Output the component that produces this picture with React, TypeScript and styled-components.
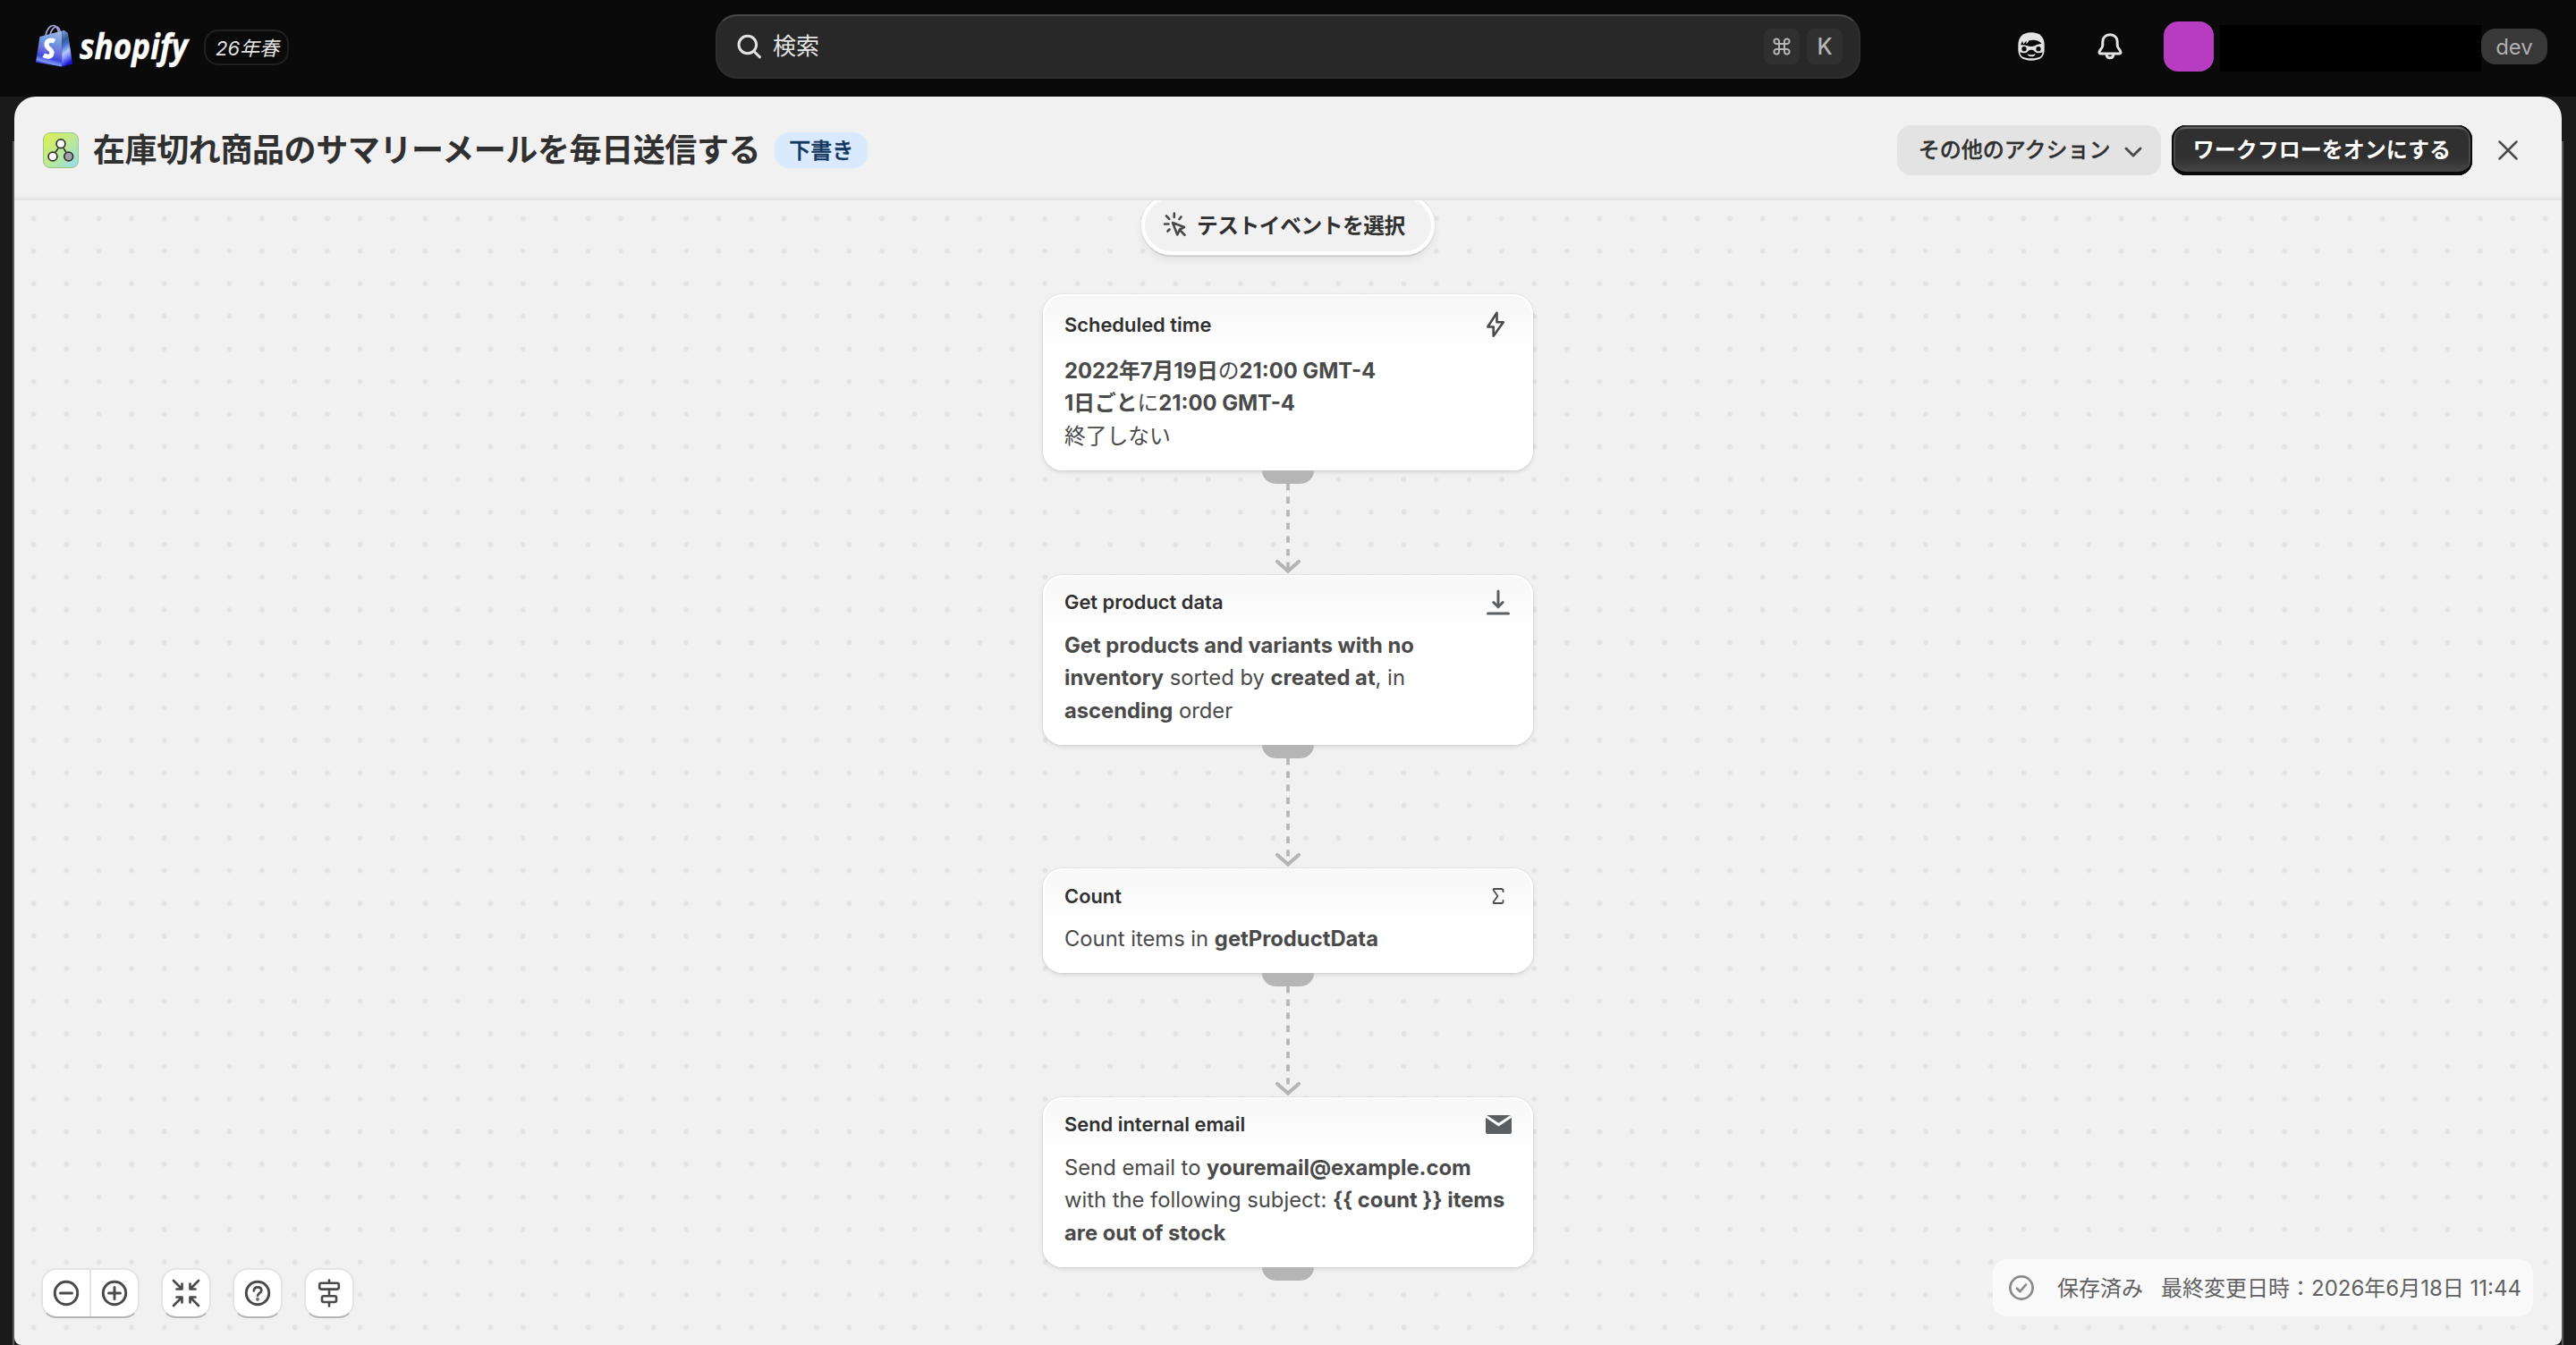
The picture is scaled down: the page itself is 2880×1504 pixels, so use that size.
import React from 'react';
import styled, { createGlobalStyle, css } from 'styled-components';

const GlobalStyle = createGlobalStyle`
  *, *::before, *::after { box-sizing: border-box; }
  body {
    margin: 0;
    background: #1a1a1a;
    font-family: Inter, "Noto Sans CJK JP", sans-serif;
    color: #303030;
  }
  button { font: inherit; border: 0; padding: 0; margin: 0; background: none; color: inherit; }
  svg { display: block; flex: none; }
`;

const Shell = styled.div`
  display: flex;
  flex-direction: column;
  width: 2880px;
  height: 1504px;
  overflow: hidden;
  background: #1a1a1a;
`;

/* ---------- top bar ---------- */

const TopBar = styled.header`
  display: grid;
  grid-template-columns: 800px 1280px 800px;
  height: 108px;
  flex: none;
  background: #0a0a0a;
`;

const Brand = styled.div`
  display: flex;
  align-items: flex-start;
  padding: 20px 0 0 38px;
`;

const Wordmark = styled.text`
  font-family: "Open Sans", sans-serif;
  font-weight: 700;
  font-style: italic;
  font-size: 38.5px;
  fill: #fff;
  stroke: #fff;
  stroke-width: 0.4px;
`;

const EditionBadge = styled.span`
  display: flex;
  align-items: center;
  justify-content: center;
  width: 95px;
  height: 40px;
  margin: 13px 0 0 10px;
  padding: 0 0 2px 2px;
  border: 2px solid #212121;
  border-radius: 16px;
  color: #e3e3e3;
  font-size: 22px;
  font-style: italic;
`;

const SearchField = styled.div`
  display: flex;
  align-items: center;
  height: 72px;
  margin-top: 16px;
  padding: 0 18px 0 22px;
  border: 2px solid #303030;
  border-top-color: #474747;
  border-radius: 24px;
  background: #282828;
  color: #e3e3e3;
  font-size: 26px;
`;

const SearchLabel = styled.span`
  flex: 1;
  margin-left: 12px;
  line-height: 36px;
`;

const Key = styled.kbd`
  display: flex;
  align-items: center;
  justify-content: center;
  width: 40px;
  height: 40px;
  margin-left: 8px;
  border-radius: 8px;
  background: #303030;
  color: #b5b5b5;
  font: 500 25px Inter, sans-serif;
`;

const Account = styled.div`
  display: flex;
  align-items: center;
  height: 104px;
  padding-left: 176px;
`;

const BellSlot = styled.span`
  margin: 0 46px 0 59px;
`;

const Avatar = styled.span`
  width: 56px;
  height: 56px;
  border-radius: 16px;
  background: #b63cc0;
`;

const StoreName = styled.span`
  width: 292px;
  height: 52px;
  margin: 4px 0 0 7px;
  background: #000;
`;

const PlanTag = styled.span`
  display: flex;
  align-items: center;
  justify-content: center;
  width: 74px;
  height: 40px;
  border-radius: 16px;
  background: #383838;
  color: #b0b0b0;
  font-size: 24px;
`;

/* ---------- panel ---------- */

const Panel = styled.main`
  display: flex;
  flex-direction: column;
  flex: 1;
  min-height: 0;
  margin: 0 16px;
  border-radius: 24px 24px 8px 8px;
  background: #f1f1f1;
  overflow: hidden;
`;

const PanelEdge = styled.div`
  display: flex;
  flex: 1;
  min-height: 0;
  flex-direction: column;
  background:
    linear-gradient(#5c5c5c, #5c5c5c) 14px 50px / 2px 100% no-repeat,
    linear-gradient(#5c5c5c, #5c5c5c) 2864px 50px / 2px 100% no-repeat;
`;

const PanelHeader = styled.div`
  display: flex;
  align-items: center;
  flex: none;
  height: 116px;
  padding: 6px 32px 0 32px;
  border-bottom: 2px solid #e3e3e3;
  box-shadow: inset 0 -2px 0 #e9e9e9;
`;

const Title = styled.h1`
  margin: 0 0 0 16px;
  font-size: 36px;
  line-height: 48px;
  font-weight: 700;
  letter-spacing: -0.4px;
  white-space: nowrap;
`;

const StatusBadge = styled.span`
  display: flex;
  align-items: center;
  height: 40px;
  margin-left: 16px;
  padding: 0 16px 3px;
  border-radius: 16px;
  background: #d9eaff;
  color: #14375e;
  font-size: 24px;
  font-weight: 500;
  -webkit-text-stroke: 0.4px #14375e;
`;

const HeaderActions = styled.div`
  display: flex;
  align-items: center;
  margin-left: auto;
`;

const ActionButton = styled.button<{ $primary?: boolean }>`
  display: flex;
  align-items: center;
  height: 56px;
  padding: 0 24px 5px;
  border-radius: 16px;
  font-size: 24px;
  font-weight: 500;
  white-space: nowrap;
  ${(p) =>
    p.$primary
      ? css`
          margin-left: 12px;
          background: linear-gradient(180deg, #303030 63%, #4a4a4a 100%);
          color: #fff;
          font-weight: 700;
          box-shadow: inset 0 -4px 0 #0a0a0a, inset 2px 0 0 #0a0a0a, inset -2px 0 0 #0a0a0a,
            inset 0 2px 0 #303030, inset 4px 0 0 #4a4a4a, inset -4px 0 0 #4a4a4a, inset 0 4px 0 #616161;
        `
      : css`
          width: 295px;
          justify-content: space-between;
          padding-right: 20px;
          background: #e3e3e3;
          -webkit-text-stroke: 0.3px #303030;

          svg { margin-top: 8px; }
        `}
`;

const CloseButton = styled.button`
  display: flex;
  align-items: center;
  justify-content: center;
  width: 56px;
  height: 56px;
  margin-left: 12px;
`;

/* ---------- canvas ---------- */

const Canvas = styled.div`
  position: relative;
  display: flex;
  flex-direction: column;
  align-items: center;
  flex: 1;
  min-height: 0;
  overflow: hidden;
  background: radial-gradient(circle at center, #e3e3e3 2.5px, rgba(227, 227, 227, 0) 3.3px) 3.5px 2.1px / 36.48px 36.48px;
`;

const TestEventButton = styled.button`
  display: flex;
  align-items: center;
  flex: none;
  width: 328px;
  height: 67px;
  margin-top: -6px;
  padding: 0 0 1px 20px;
  border: 4px solid #fff;
  border-radius: 34px;
  background: #f1f1f1;
  box-shadow: 0 0 0 1px #e2e2e2, 0 2px 1px #c4c4c4, 0 6px 10px rgba(0, 0, 0, 0.06);
  font-size: 23.7px;
  font-weight: 700;
  letter-spacing: -0.4px;
  white-space: nowrap;
  gap: 11px;
`;

const Flow = styled.div`
  display: flex;
  flex-direction: column;
  align-items: center;
  margin-top: 44px;
`;

const Card = styled.section<{ $h: number; $pad: number }>`
  display: flex;
  flex-direction: column;
  flex: none;
  width: 548px;
  height: ${(p) => p.$h}px;
  padding: ${(p) => p.$pad}px 24px 0;
  border: 2px solid #fff;
  border-width: 2px 0 0;
  border-radius: 22px;
  background: linear-gradient(180deg, #f7f7f7 0, #fff 66px);
  box-shadow: inset 2px 0 0 #fff, inset -2px 0 0 #fff, 0 0 0 1px rgba(0, 0, 0, 0.03), 0 2px 5px rgba(0, 0, 0, 0.12);
`;

const CardHead = styled.div`
  display: flex;
  align-items: center;
  justify-content: space-between;
  height: 30px;
`;

const CardTitle = styled.h2`
  margin: 0;
  font-size: 21.9px;
  line-height: 30px;
  font-weight: 600;
`;

const IconSlot = styled.span`
  display: flex;
  align-items: center;
  justify-content: center;
  width: 38px;
  height: 38px;
  margin-right: -4px;
`;

const CardBody = styled.p<{ $top: number }>`
  margin: ${(p) => p.$top}px 0 0;
  color: #4a4a4a;
  font-size: 23.77px;
  line-height: 36.48px;
  white-space: nowrap;

  b { font-weight: 700; }
`;

const Connector = styled.div<{ $h: number }>`
  display: flex;
  flex-direction: column;
  align-items: center;
  flex: none;
  height: ${(p) => p.$h}px;
`;

const Tab = styled.span`
  flex: none;
  width: 58px;
  height: 15px;
  border-radius: 0 0 15px 15px;
  background: #b5b5b5;
`;

const Toolbar = styled.div`
  position: absolute;
  left: 30px;
  top: 1194px;
  display: flex;
  gap: 24px;
`;

const ToolGroup = styled.div`
  display: flex;
  height: 56px;
  border: 2px solid #e3e3e3;
  border-bottom-color: #b5b5b5;
  border-radius: 17px;
  background: #fff;
`;

const ToolButton = styled.button`
  display: flex;
  align-items: center;
  justify-content: center;
  width: 52px;

  & + & {
    width: 54px;
    border-left: 2px solid #e3e3e3;
  }
`;

const SaveStatus = styled.div`
  position: absolute;
  left: 2212px;
  top: 1184px;
  display: flex;
  align-items: center;
  width: 604px;
  height: 64px;
  padding-left: 18px;
  border-radius: 16px;
  background: #fafafa;
  color: #616161;
  font-size: 24px;
  white-space: nowrap;
`;

const SavedText = styled.span<{ $gap: number }>`
  margin: 0 0 4px ${(p) => p.$gap}px;
`;

/* ---------- drawings ---------- */

const Logo = () => (
  <svg width="180" height="66" viewBox="38 20 180 66" overflow="visible">
    <defs>
      <linearGradient id="bagFront" x1="0.6" y1="0" x2="0.400" y2="1">
        <stop offset="0" stopColor="#9db4e6" />
        <stop offset="0.3" stopColor="#6f9be0" />
        <stop offset="0.55" stopColor="#6c6ee0" />
        <stop offset="0.75" stopColor="#3a48dc" />
        <stop offset="0.88" stopColor="#7f9cf5" />
        <stop offset="0.95" stopColor="#2a28d0" />
      </linearGradient>
      <linearGradient id="bagSide" x1="0" y1="0" x2="0.2" y2="1">
        <stop offset="0" stopColor="#8ea6de" />
        <stop offset="0.3" stopColor="#2f5f9c" />
        <stop offset="0.45" stopColor="#4a6fd0" />
        <stop offset="0.65" stopColor="#b9c8ff" />
        <stop offset="0.8" stopColor="#7a88f8" />
        <stop offset="1" stopColor="#1414d8" />
      </linearGradient>
    </defs>
    <path d="M51 40c1-7 5-11.500 8.500-11.500 4 0 6 5 6 9M56 39c1-5 4-9 7-9 2.500 0 4 3 4 6" fill="none" stroke="#a9a6dc" strokeWidth="1.700" />
    <path d="M44.500 41l25-6.500-.5 40-29-4.700z" fill="url(#bagFront)" />
    <path d="M69.500 34.500l2-.8 4.500 3.300 5 34.500-12 3.200z" fill="url(#bagSide)" />
    <path d="M61 46.300c-4-2.200-9-1-9 3.700 0 4.200 6.500 5 6 9.500-.5 4.200-5 4.700-9.300 2.300" fill="none" stroke="#fff" strokeWidth="5.200" />
    <Wordmark x="89" y="66" textLength="121" lengthAdjust="spacingAndGlyphs">shopify</Wordmark>
  </svg>
);

const SearchIcon = () => (
  <svg width="28" height="28" viewBox="0 0 28 28" fill="none" stroke="#e3e3e3" strokeWidth="3" strokeLinecap="round">
    <circle cx="11.800" cy="12" r="9.800" />
    <path d="M19 19.500l6.500 6.300" />
  </svg>
);

const CommandIcon = () => (
  <svg width="20" height="20" viewBox="0 0 20 20" fill="none" stroke="#b5b5b5" strokeWidth="2">
    <path d="M7 7V4.300A2.800 2.800 0 1 0 4.300 7h11.400A2.800 2.800 0 1 0 13 4.300v11.400A2.800 2.800 0 1 0 15.700 13H4.300A2.800 2.800 0 1 0 7 15.700z" />
  </svg>
);

const SidekickIcon = () => (
  <svg width="30" height="32" viewBox="0 0 90 96">
    <path d="M1 44C1 15 18 1 44 1c30 0 45 15 45 43v14c0 26-14 37-44 37S1 84 1 58z" fill="#e3e3e3" />
    <path d="M9 43l6-13 4 10 9-11 1 11 9-12c14-4 32-2 42 11-14 0-22 8-35 9-12-1-22-7-36-5z" fill="#0a0a0a" />
    <circle cx="21" cy="56" r="8" fill="#0a0a0a" />
    <circle cx="69" cy="56" r="8" fill="#0a0a0a" />
    <path d="M7 67c10 5 24 3 29-5 4-4 14-4 18 0 5 8 19 10 29 5-2 15-11 21-38 21S9 82 7 67z" fill="#0a0a0a" />
    <path d="M31 73c8 4 20 4 28-1-2 8-7 10-14 10s-11-3-14-9z" fill="#e3e3e3" />
  </svg>
);

const BellIcon = () => (
  <svg width="28" height="30" viewBox="0 0 28 30" fill="none" stroke="#e3e3e3" strokeWidth="3" strokeLinejoin="round" strokeLinecap="round">
    <path d="M14 1.700c-5 0-8.200 3.600-8.200 8v4c0 1.800-.8 3-2.200 4.600C1.500 20.700 1.300 23 4 23h20c2.700 0 2.500-2.300.4-4.700-1.400-1.600-2.200-2.800-2.200-4.600v-4c0-4.400-3.200-8-8.200-8z" />
    <path d="M10 23.500c.3 2.800 1.800 4.300 4 4.300s3.700-1.500 4-4.300" />
  </svg>
);

const FlowAppIcon = () => (
  <svg width="40" height="40" viewBox="0 0 40 40">
    <defs>
      <linearGradient id="appTile" x1="0" y1="0" x2="1" y2="1">
        <stop offset="0.100" stopColor="#d9f05a" />
        <stop offset="0.550" stopColor="#b8e89a" />
        <stop offset="1" stopColor="#93dcf5" />
      </linearGradient>
    </defs>
    <rect x="0.500" y="0.500" width="39" height="39" rx="7.500" fill="url(#appTile)" stroke="#9bc489" />
    <path d="M17.300 17.500l-4 5.500M23 17.500l3 5" stroke="#303030" strokeWidth="1.500" />
    <circle cx="20" cy="12.700" r="4.900" fill="#fff" stroke="#303030" strokeWidth="1.700" />
    <circle cx="11" cy="27" r="4.900" fill="#fff" stroke="#303030" strokeWidth="1.700" />
    <circle cx="28.700" cy="27" r="4.900" fill="#a0a0a8" stroke="#303030" strokeWidth="1.700" />
  </svg>
);

const ChevronIcon = () => (
  <svg width="22" height="14" viewBox="0 0 22 14" fill="none" stroke="#4a4a4a" strokeWidth="3" strokeLinecap="round" strokeLinejoin="round">
    <path d="M3 3l8 8 8-8" />
  </svg>
);

const CloseIcon = () => (
  <svg width="22" height="22" viewBox="0 0 22 22" stroke="#4a4a4a" strokeWidth="2.500" strokeLinecap="round">
    <path d="M1.500 1.500l19 19M20.500 1.500l-19 19" />
  </svg>
);

const CursorClickIcon = () => (
  <svg width="27" height="29" viewBox="0 0 27 29" fill="none" stroke="#4a4a4a" strokeWidth="2.600" strokeLinecap="round" strokeLinejoin="round">
    <path d="M11 12l13 5-5 2.500-2.700 6z" />
    <path d="M19.500 20.500l5 5.300M12.800 1.500v4.500M2 13.500h4.500M4 4.500l3.200 3.300M20.500 5.500l-2 2.500M5.500 21.500l2-2" />
  </svg>
);

const BoltIcon = () => (
  <svg width="28" height="32" viewBox="0 0 28 32" fill="none" stroke="#4a4a4a" strokeWidth="2.600" strokeLinejoin="round">
    <path d="M12.500 2.800L2.300 18.500h6.400v10.300L19.800 13.200h-7.300z" />
  </svg>
);

const DownloadIcon = () => (
  <svg width="28" height="30" viewBox="0 0 28 30" fill="none" stroke="#5c5f62" strokeWidth="3" strokeLinecap="round" strokeLinejoin="round">
    <path d="M14 3v17M8.800 15.500L14 20.800l5.200-5.300M2.500 28h23" />
  </svg>
);

const SigmaIcon = () => (
  <svg width="14" height="20" viewBox="0 0 14 20" fill="none" stroke="#4a4a4a" strokeWidth="1.800" strokeLinecap="round" strokeLinejoin="round">
    <path d="M12.500 5V3.500a1.500 1.500 0 0 0-1.500-1.500H2.500c-1 0-1.200 1-.6 1.800L6.500 10l-4.600 6.200c-.6.800-.4 1.800.6 1.800H11a1.500 1.500 0 0 0 1.500-1.500V15" />
  </svg>
);

const MailIcon = () => (
  <svg width="29" height="21" viewBox="0 0 29 21" fill="#5c5f62">
    <path d="M1.200 0h26.600L14.500 8.800z" />
    <path d="M0 2.800l14.500 9.700L29 2.800v16.200a2 2 0 0 1-2 2H2a2 2 0 0 1-2-2z" />
  </svg>
);

const Arrow = ({ height }: { height: number }) => (
  <svg width="32" height={height} viewBox={`0 0 32 ${height}`} fill="none" stroke="#b5b5b5" strokeWidth="3.650">
    <path d={`M16 0V${height - 5}`} strokeDasharray="7.300 7.300" />
    <path d={`M4 ${height - 15}l12 10.500 12-10.500`} strokeWidth="4.200" strokeLinecap="round" />
  </svg>
);

const toolStroke = { fill: 'none', stroke: '#4a4a4a', strokeWidth: 3, strokeLinecap: 'round', strokeLinejoin: 'round' } as const;

const ZoomIcon = ({ plus }: { plus?: boolean }) => (
  <svg width="30" height="30" viewBox="0 0 30 30" {...toolStroke}>
    <circle cx="15" cy="15" r="12.700" />
    <path d={plus ? 'M8.500 15h13M15 8.500v13' : 'M8.500 15h13'} />
  </svg>
);

const CollapseIcon = () => (
  <svg width="32" height="32" viewBox="0 0 32 32" {...toolStroke} strokeWidth="2.700">
    <path d="M2 2l9 9M5.500 11.500h6V5.500M30 2l-9 9M26.500 11.500h-6V5.500M2 30l9-9M5.500 20.500h6v6M30 30l-9-9M26.500 20.500h-6v6" />
  </svg>
);

const HelpIcon = () => (
  <svg width="30" height="30" viewBox="0 0 30 30" {...toolStroke}>
    <circle cx="15" cy="15" r="12.700" />
    <path d="M10.800 12.300c.2-2.500 1.900-4 4.300-4 2.500 0 4.200 1.500 4.200 3.700 0 3.200-4 3-4.200 5.700" strokeWidth="2.700" />
    <circle cx="15" cy="21.800" r="0.600" strokeWidth="2.500" />
  </svg>
);

const AlignIcon = () => (
  <svg width="26" height="32" viewBox="0 0 26 32" {...toolStroke} strokeWidth="2.600">
    <rect x="2.200" y="4.800" width="21.600" height="6.800" rx="2" />
    <rect x="5" y="19.200" width="16" height="6.800" rx="2" />
    <path d="M13 1.500v3M13 12v7M13 26.500v4" />
  </svg>
);

const SavedIcon = () => (
  <svg width="28" height="28" viewBox="0 0 28 28" fill="none" stroke="#8a8a8a" strokeWidth="2.700" strokeLinecap="round" strokeLinejoin="round">
    <circle cx="14" cy="14" r="12.600" />
    <path d="M9 14.800l3.500 3.400 6.500-7.700" />
  </svg>
);

/* ---------- workflow ---------- */

interface Step {
  title: string;
  icon: React.ReactNode;
  body: React.ReactNode;
  height: number;
  pad: number;
  bodyTop: number;
  next?: number;
}

const steps: Step[] = [
  {
    title: 'Scheduled time',
    icon: <BoltIcon />,
    height: 197,
    pad: 17,
    bodyTop: 19,
    next: 117,
    body: (
      <>
        <b>2022年7月19日</b>の<b>21:00 GMT-4</b>
        <br />
        <b>1日ごと</b>に<b>21:00 GMT-4</b>
        <br />
        終了しない
      </>
    ),
  },
  {
    title: 'Get product data',
    icon: <DownloadIcon />,
    height: 190,
    pad: 13,
    bodyTop: 16,
    next: 138,
    body: (
      <>
        <b>Get products and variants with no</b>
        <br />
        <b>inventory</b> sorted by <b>created at</b>, in
        <br />
        <b>ascending</b> order
      </>
    ),
  },
  {
    title: 'Count',
    icon: <SigmaIcon />,
    height: 117,
    pad: 14,
    bodyTop: 15,
    next: 139,
    body: (
      <>
        Count items in <b>getProductData</b>
      </>
    ),
  },
  {
    title: 'Send internal email',
    icon: <MailIcon />,
    height: 190,
    pad: 13,
    bodyTop: 15.6,
    body: (
      <>
        Send email to <b>youremail@example.com</b>
        <br />
        with the following subject: <b>{'{{ count }} items'}</b>
        <br />
        <b>are out of stock</b>
      </>
    ),
  },
];

const StepCard = ({ step }: { step: Step }) => (
  <>
    <Card $h={step.height} $pad={step.pad}>
      <CardHead>
        <CardTitle>{step.title}</CardTitle>
        <IconSlot>{step.icon}</IconSlot>
      </CardHead>
      <CardBody $top={step.bodyTop}>{step.body}</CardBody>
    </Card>
    <Connector $h={step.next ?? 15}>
      <Tab />
      {step.next && <Arrow height={step.next - 15} />}
    </Connector>
  </>
);

export default function App() {
  return (
    <Shell lang="ja">
      <GlobalStyle />
      <TopBar>
        <Brand>
          <Logo />
          <EditionBadge>26年春</EditionBadge>
        </Brand>
        <SearchField>
          <SearchIcon />
          <SearchLabel>検索</SearchLabel>
          <Key><CommandIcon /></Key>
          <Key>K</Key>
        </SearchField>
        <Account>
          <SidekickIcon />
          <BellSlot><BellIcon /></BellSlot>
          <Avatar />
          <StoreName />
          <PlanTag>dev</PlanTag>
        </Account>
      </TopBar>
      <PanelEdge>
        <Panel>
          <PanelHeader>
            <FlowAppIcon />
            <Title>在庫切れ商品のサマリーメールを毎日送信する</Title>
            <StatusBadge>下書き</StatusBadge>
            <HeaderActions>
              <ActionButton>
                その他のアクション
                <ChevronIcon />
              </ActionButton>
              <ActionButton $primary>ワークフローをオンにする</ActionButton>
              <CloseButton><CloseIcon /></CloseButton>
            </HeaderActions>
          </PanelHeader>
          <Canvas>
            <TestEventButton>
              <CursorClickIcon />
              テストイベントを選択
            </TestEventButton>
            <Flow>
              {steps.map((step) => (
                <StepCard key={step.title} step={step} />
              ))}
            </Flow>
            <Toolbar>
              <ToolGroup>
                <ToolButton><ZoomIcon /></ToolButton>
                <ToolButton><ZoomIcon plus /></ToolButton>
              </ToolGroup>
              <ToolGroup><ToolButton><CollapseIcon /></ToolButton></ToolGroup>
              <ToolGroup><ToolButton><HelpIcon /></ToolButton></ToolGroup>
              <ToolGroup><ToolButton><AlignIcon /></ToolButton></ToolGroup>
            </Toolbar>
            <SaveStatus>
              <SavedIcon />
              <SavedText $gap={26}>保存済み</SavedText>
              <SavedText $gap={20}>最終変更日時：2026年6月18日 11:44</SavedText>
            </SaveStatus>
          </Canvas>
        </Panel>
      </PanelEdge>
    </Shell>
  );
}
